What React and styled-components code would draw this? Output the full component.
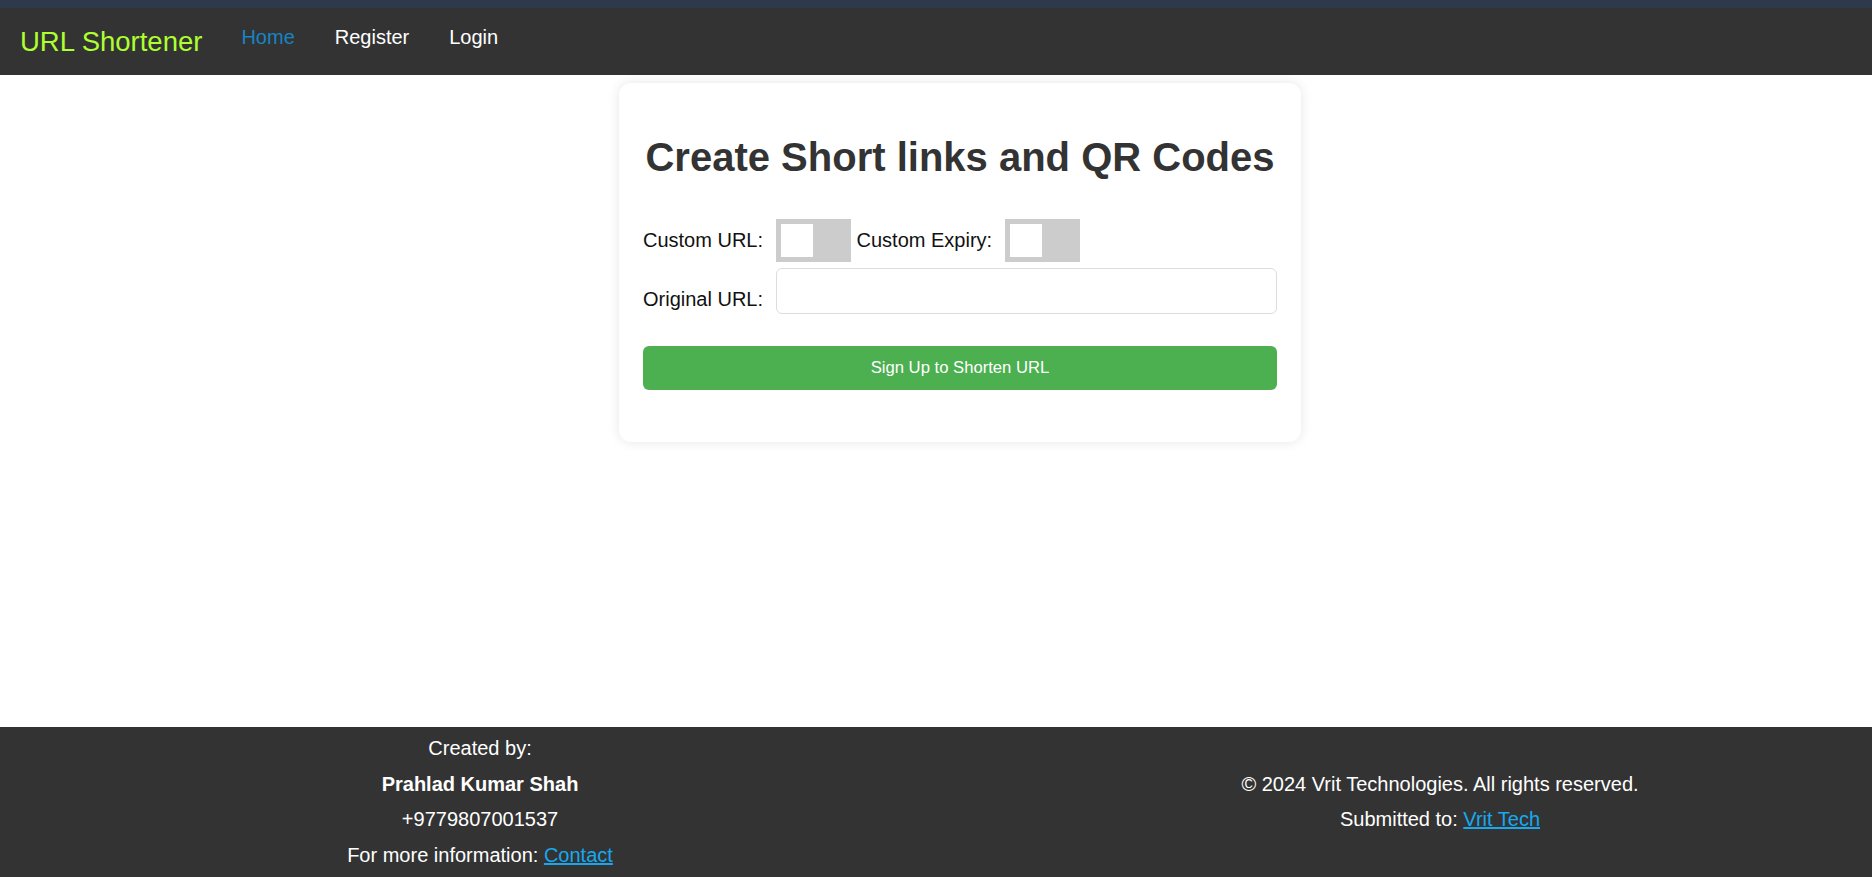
import React from "react";
import styled, { createGlobalStyle } from "styled-components";

const GlobalStyle = createGlobalStyle`
  html, body {
    margin: 0;
    padding: 0;
    background: #ffffff;
    font-family: "Liberation Sans", Arial, sans-serif;
  }
  #root {
    min-height: 100vh;
  }
  * {
    box-sizing: border-box;
  }
`;

const Page = styled.div`
  min-height: 100vh;
  display: flex;
  flex-direction: column;
`;

const Header = styled.header`
  height: 75px;
  background: #333333;
  border-top: 8px solid #2e3a4c;
  padding: 18px 20px 0;
  display: flex;
  align-items: flex-start;
  gap: 39px;
`;

const Logo = styled.div`
  font-size: 27.5px;
  color: #adff2f;
  line-height: normal;
`;

const Nav = styled.nav`
  display: flex;
  gap: 40px;
`;

const NavLink = styled.a`
  font-size: 20px;
  line-height: normal;
  text-decoration: none;
  color: ${(p) => (p.$active ? "#1685c4" : "#ffffff")};
  cursor: pointer;
`;

const Main = styled.main`
  flex: 1;
  display: flex;
  justify-content: center;
  align-items: flex-start;
  padding: 8px 0 0 48px;
`;

const Card = styled.section`
  width: 682px;
  padding: 24px;
  background: #ffffff;
  border-radius: 12px;
  box-shadow: 0 0 12px rgba(0, 0, 0, 0.1);
`;

const Title = styled.h1`
  margin: 28px 0 39px;
  font-size: 40px;
  font-weight: 700;
  line-height: normal;
  text-align: center;
  color: #333333;
`;

const Form = styled.form`
  margin: 0;
  display: flex;
  flex-direction: column;
`;

const Row = styled.div`
  display: flex;
  align-items: center;
  margin-bottom: ${(p) => p.$mb || 0}px;
`;

const Label = styled.label`
  font-size: 20px;
  color: #111111;
  margin-right: 12.5px;
  margin-top: ${(p) => (p.$drop ? 17 : 0)}px;
  white-space: nowrap;
`;

const Switch = styled.span`
  width: 75px;
  height: 42.5px;
  background: #cccccc;
  padding: 5px;
  display: flex;
  align-items: center;
  margin-right: 6px;
  flex-shrink: 0;
`;

const Knob = styled.span`
  width: 32.5px;
  height: 32.5px;
  background: #ffffff;
`;

const Input = styled.input`
  flex: 1;
  height: 46px;
  border: 1px solid #dddddd;
  border-radius: 6px;
  padding: 0 10px;
  font-size: 20px;
  font-family: "Liberation Sans", Arial, sans-serif;
  outline: none;
`;

const SubmitButton = styled.button`
  margin-top: 32px;
  margin-bottom: 28px;
  width: 100%;
  height: 44px;
  border: none;
  border-radius: 6px;
  background: #4caf50;
  color: #ffffff;
  font-size: 16.67px;
  font-family: "Liberation Sans", Arial, sans-serif;
  cursor: pointer;
`;

const Footer = styled.footer`
  height: 150px;
  background: #333333;
  color: #ffffff;
  padding: 10px 0;
  display: grid;
  grid-template-columns: 960px 1fr;
  align-items: center;
`;

const FooterCol = styled.div`
  display: flex;
  flex-direction: column;
  align-items: center;
  gap: 12.5px;
  font-size: 20px;
  line-height: normal;
  text-align: center;
  padding-left: ${(p) => p.$offset || 0}px;
`;

const Strong = styled.span`
  font-weight: 700;
`;

const FooterLink = styled.a`
  color: #17a9ef;
  text-decoration: underline;
  cursor: pointer;
`;

export default function App() {
  return (
    <>
      <GlobalStyle />
      <Page>
        <Header>
          <Logo>URL Shortener</Logo>
          <Nav>
            <NavLink $active>Home</NavLink>
            <NavLink>Register</NavLink>
            <NavLink>Login</NavLink>
          </Nav>
        </Header>
        <Main>
          <Card>
            <Title>Create Short links and QR Codes</Title>
            <Form onSubmit={(e) => e.preventDefault()}>
              <Row $mb={6}>
                <Label>Custom URL:</Label>
                <Switch>
                  <Knob />
                </Switch>
                <Label>Custom Expiry:</Label>
                <Switch>
                  <Knob />
                </Switch>
              </Row>
              <Row>
                <Label $drop>Original URL:</Label>
                <Input type="text" />
              </Row>
              <SubmitButton type="submit">Sign Up to Shorten URL</SubmitButton>
            </Form>
          </Card>
        </Main>
        <Footer>
          <FooterCol>
            <span>Created by:</span>
            <Strong>Prahlad Kumar Shah</Strong>
            <span>+9779807001537</span>
            <span>
              For more information: <FooterLink>Contact</FooterLink>
            </span>
          </FooterCol>
          <FooterCol $offset={48}>
            <span>© 2024 Vrit Technologies. All rights reserved.</span>
            <span>
              Submitted to: <FooterLink>Vrit Tech</FooterLink>
            </span>
          </FooterCol>
        </Footer>
      </Page>
    </>
  );
}
